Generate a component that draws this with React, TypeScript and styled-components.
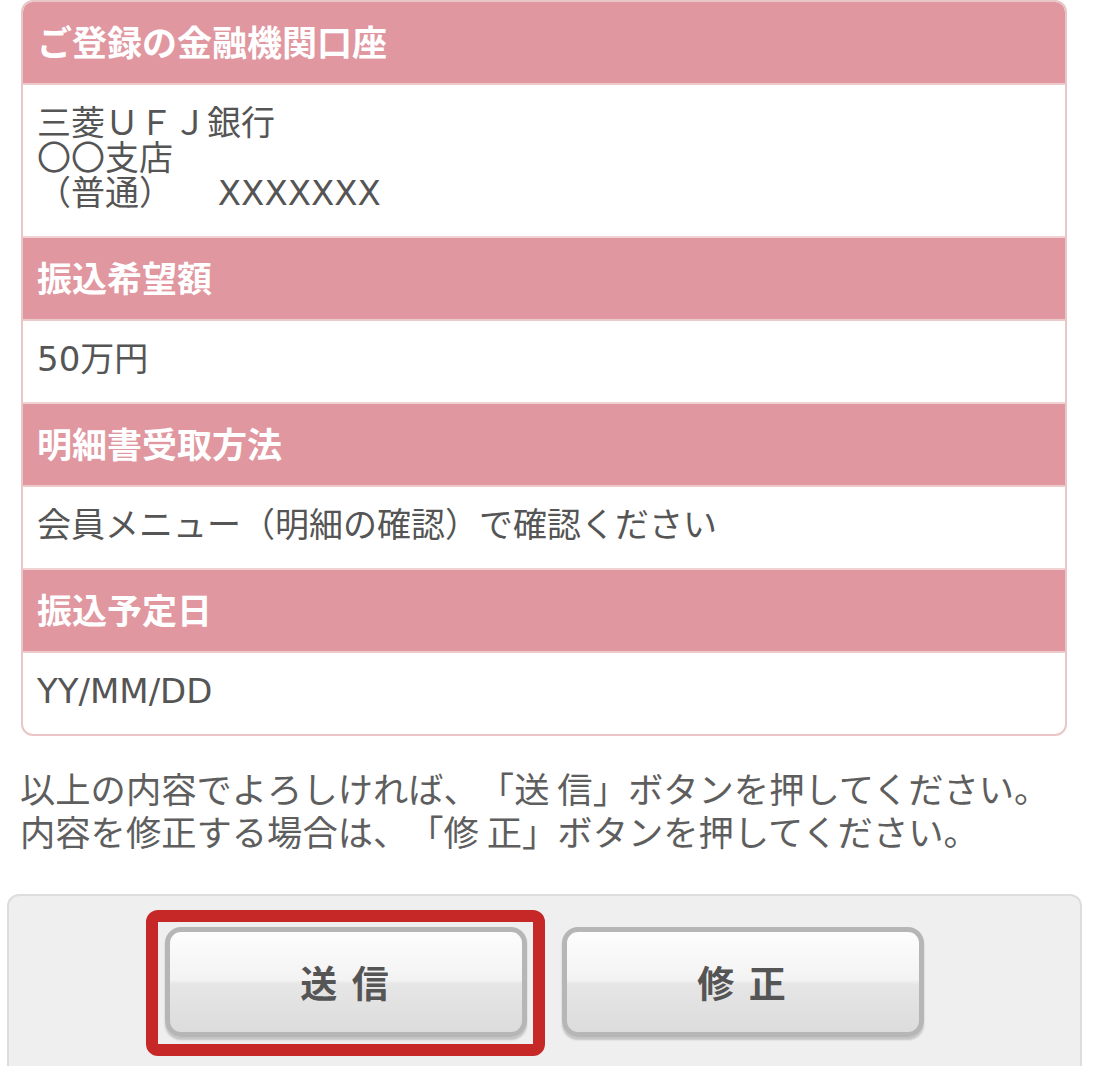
import styled, { createGlobalStyle } from "styled-components";

const GlobalStyle = createGlobalStyle`
  body {
    margin: 0;
    background: #ffffff;
    font-family: "DejaVu Sans", "Noto Sans CJK JP", sans-serif;
    text-spacing-trim: space-all;
  }
`;

const Page = styled.div`
  width: 1093px;
  box-sizing: border-box;
  padding: 0 11px 0 7px;
`;

const Card = styled.div`
  margin: 0 15px 0 14px;
  border: 2px solid #eac6c6;
  border-radius: 12px;
  overflow: hidden;
  background: #ffffff;
`;

const Heading = styled.div`
  height: 83px;
  box-sizing: border-box;
  display: flex;
  align-items: center;
  padding: 0 14px 5px;
  background: #e0979f;
  border-bottom: 2px solid #eccaca;
  color: #ffffff;
  font-family: "Noto Sans CJK JP", sans-serif;
  font-size: 35px;
  font-weight: 700;
`;

const Value = styled.div<{ $last?: boolean }>`
  padding: 21px 14px 25px;
  line-height: 35px;
  font-size: 34px;
  color: #555555;
  border-bottom: ${(p) => (p.$last ? "none" : "2px solid #f0d2d2")};
  white-space: pre;
`;

const Note = styled.p`
  margin: 30px 0 42px 13px;
  font-family: "Noto Sans CJK JP", sans-serif;
  font-size: 35.3px;
  line-height: 43px;
  color: #5e5e5e;
  white-space: nowrap;
`;

const ButtonArea = styled.div`
  background: #efefef;
  border: 2px solid #dddddd;
  border-bottom: none;
  border-radius: 12px 12px 0 0;
  height: 172px;
  padding-top: 31px;
  box-sizing: border-box;
  display: flex;
  align-items: flex-start;
  justify-content: center;
  gap: 35px;
`;

const Highlight = styled.div`
  position: relative;
  display: flex;
  &::after {
    content: "";
    position: absolute;
    top: -17px;
    bottom: -19px;
    left: -19px;
    right: -18px;
    border: 12px solid #c62828;
    border-radius: 12px;
    pointer-events: none;
  }
`;

const GlossButton = styled.button`
  width: 362px;
  height: 110px;
  box-sizing: border-box;
  border: 5px solid #b6b6b6;
  border-radius: 16px;
  background: linear-gradient(
    to bottom,
    #fdfdfd 0%,
    #f3f3f3 48%,
    #e6e6e6 52%,
    #dcdcdc 100%
  );
  box-shadow: 0 3px 2px rgba(0, 0, 0, 0.18);
  font-family: "Noto Sans CJK JP", sans-serif;
  font-size: 37px;
  font-weight: 700;
  color: #555555;
  letter-spacing: 3px;
  cursor: pointer;
`;

const items = [
  { label: "ご登録の金融機関口座", value: "三菱ＵＦＪ銀行\n〇〇支店\n（普通）　 XXXXXXX" },
  { label: "振込希望額", value: "50万円" },
  { label: "明細書受取方法", value: "会員メニュー（明細の確認）で確認ください" },
  { label: "振込予定日", value: "YY/MM/DD" },
];

export default function App() {
  return (
    <Page>
      <GlobalStyle />
      <Card>
        {items.map((item, i) => (
          <div key={item.label}>
            <Heading>{item.label}</Heading>
            <Value $last={i === items.length - 1}>{item.value}</Value>
          </div>
        ))}
      </Card>
      <Note>
        以上の内容でよろしければ、「送 信」ボタンを押してください。
        <br />
        内容を修正する場合は、「修 正」ボタンを押してください。
      </Note>
      <ButtonArea>
        <Highlight>
          <GlossButton type="button">送 信</GlossButton>
        </Highlight>
        <GlossButton type="button">修 正</GlossButton>
      </ButtonArea>
    </Page>
  );
}
